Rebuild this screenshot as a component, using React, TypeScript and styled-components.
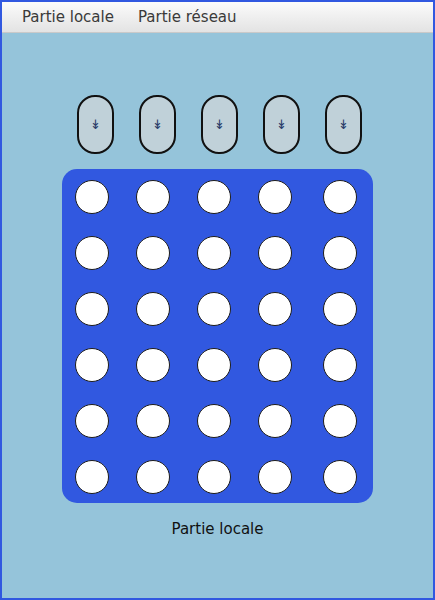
import styled, { createGlobalStyle } from "styled-components"

const GlobalStyle = createGlobalStyle`
  html, body {
    margin: 0;
    padding: 0;
    background: #95c4da;
  }
  * {
    box-sizing: border-box;
  }
`

const Window = styled.div`
  width: 435px;
  height: 600px;
  border: 2px solid #3158e0;
  background: #95c4da;
  display: flex;
  flex-direction: column;
  font-family: "DejaVu Sans", Verdana, sans-serif;
`

const MenuBar = styled.nav`
  height: 31px;
  display: flex;
  align-items: center;
  padding-left: 8px;
  background: linear-gradient(to bottom, #fbfbfb, #e3e3e3);
  border-bottom: 1px solid #c9c9c9;
`

const MenuItem = styled.span`
  padding: 0 12px;
  font-size: 15px;
  color: #3a3a3a;
  line-height: 30px;
`

const Content = styled.main`
  flex: 1;
  display: flex;
  flex-direction: column;
  align-items: center;
  padding-top: 62px;
`

const ButtonRow = styled.div`
  display: flex;
  gap: 25px;
  padding-left: 4px;
  margin-bottom: 15px;
`

const DropButton = styled.button`
  width: 37px;
  height: 59px;
  border: 2px solid #111;
  border-radius: 18px;
  background: #c0d1d9;
  color: #2b3d6a;
  font-family: "DejaVu Sans", sans-serif;
  font-size: 13px;
  padding: 0;
  display: flex;
  align-items: center;
  justify-content: center;
`

const Board = styled.div`
  width: 311px;
  height: 334px;
  background: #3158e0;
  border-radius: 15px;
  padding: 11px 0 0 13px;
  display: grid;
  grid-template-columns: 61px 61px 61px 65px 34px;
  grid-auto-rows: 34px;
  row-gap: 22px;
`

const Hole = styled.div`
  width: 34px;
  height: 34px;
  border-radius: 50%;
  background: #ffffff;
  border: 1px solid #1c1c1c;
`

const Status = styled.p`
  margin: 17px 0 0;
  font-size: 15px;
  color: #111;
`

const COLS = 5
const ROWS = 6

export default function App() {
  return (
    <Window>
      <GlobalStyle />
      <MenuBar>
        <MenuItem>Partie locale</MenuItem>
        <MenuItem>Partie réseau</MenuItem>
      </MenuBar>
      <Content>
        <ButtonRow>
          {Array.from({ length: COLS }).map((_, i) => (
            <DropButton key={i}>↡</DropButton>
          ))}
        </ButtonRow>
        <Board>
          {Array.from({ length: COLS * ROWS }).map((_, i) => (
            <Hole key={i} />
          ))}
        </Board>
        <Status>Partie locale</Status>
      </Content>
    </Window>
  )
}
